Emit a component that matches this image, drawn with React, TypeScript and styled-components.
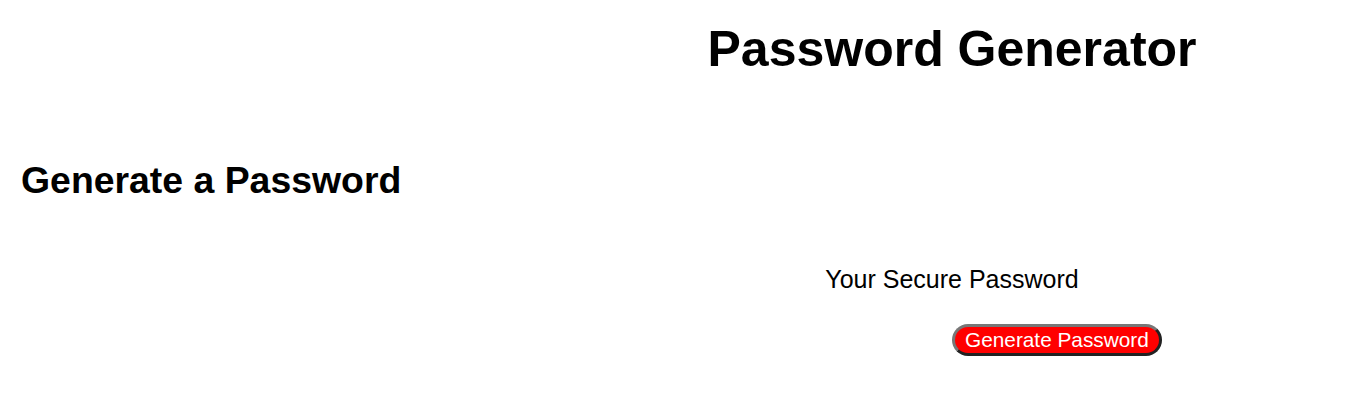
import styled, { createGlobalStyle } from "styled-components";

const GlobalStyle = createGlobalStyle`
  body {
    margin: 0;
    background: #ffffff;
    font-family: "Liberation Sans", Arial, sans-serif;
    color: #000000;
  }
`;

const Page = styled.div`
  display: grid;
  grid-template-columns: 554px 1fr;
  align-items: start;
`;

const Header = styled.h1`
  grid-column: 2;
  margin: 20px 0 0;
  font-size: 50px;
  line-height: 58px;
  font-weight: 700;
  text-align: center;
`;

const SideTitle = styled.h2`
  grid-column: 1;
  margin: 81px 0 0 21px;
  font-size: 37.4px;
  line-height: 42px;
  font-weight: 700;
`;

const Card = styled.div`
  grid-column: 2;
  display: flex;
  flex-direction: column;
`;

const CardLabel = styled.p`
  margin: 187px 0 0;
  font-size: 25px;
  line-height: 28px;
  text-align: center;
`;

const ButtonRow = styled.div`
  display: flex;
  padding-left: 50%;
  margin-top: 31px;
`;

const GenerateButton = styled.button`
  font-family: "Liberation Sans", Arial, sans-serif;
  font-size: 20.8px;
  line-height: 24px;
  padding: 1px 10px;
  color: #ffffff;
  background: #ff0000;
  border: 3px solid;
  border-color: #777777 #222222 #222222 #777777;
  border-radius: 16px;
  cursor: pointer;
`;

export default function App() {
  return (
    <>
      <GlobalStyle />
      <Page>
        <Header>Password Generator</Header>
        <SideTitle>Generate a Password</SideTitle>
        <Card>
          <CardLabel>Your Secure Password</CardLabel>
          <ButtonRow>
            <GenerateButton>Generate Password</GenerateButton>
          </ButtonRow>
        </Card>
      </Page>
    </>
  );
}
